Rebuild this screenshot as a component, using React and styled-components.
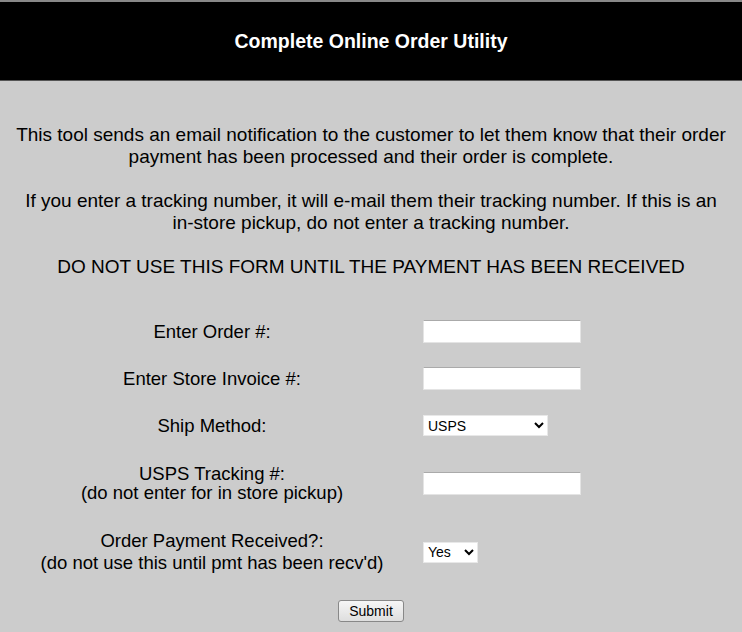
import React from "react";
import styled, { createGlobalStyle } from "styled-components";

const GlobalStyle = createGlobalStyle`
  html, body {
    margin: 0;
    padding: 0;
    background: #cccccc;
  }
  body {
    font-family: "Liberation Sans", Arial, sans-serif;
    color: #000;
  }
`;

const rows = [
  { label: ["Enter Order #:"], field: "text" },
  { label: ["Enter Store Invoice #:"], field: "text" },
  { label: ["Ship Method:"], field: "ship" },
  { label: ["USPS Tracking #:", "(do not enter for in store pickup)"], field: "text", lh: 19 },
  {
    label: ["Order Payment Received?:", "(do not use this until pmt has been recv'd)"],
    field: "paid",
    lh: 22
  }
];

export default function App() {
  return (
    <>
      <GlobalStyle />
      <Page>
        <Header>
          <Title>Complete Online Order Utility</Title>
        </Header>
        <Intro>
          <Para>
            This tool sends an email notification to the customer to let them know that their order
            payment has been processed and their order is complete.
          </Para>
          <Para>
            If you enter a tracking number, it will e-mail them their tracking number. If this is an{" "}
            <NoWrap>in-store</NoWrap> pickup, do not enter a tracking number.
          </Para>
          <Para>DO NOT USE THIS FORM UNTIL THE PAYMENT HAS BEEN RECEIVED</Para>
        </Intro>
        <Form onSubmit={e => e.preventDefault()}>
          {rows.map((row, i) => (
            <Row key={i} tall={row.label.length > 1}>
              <Label lh={row.lh || 19}>
                {row.label.map((line, j) => (
                  <div key={j}>{line}</div>
                ))}
              </Label>
              <Field>
                {row.field === "text" && <TextInput type="text" />}
                {row.field === "ship" && (
                  <Select width={125} defaultValue="USPS">
                    <option>USPS</option>
                    <option>UPS</option>
                    <option>FedEx</option>
                    <option>In Store Pickup</option>
                  </Select>
                )}
                {row.field === "paid" && (
                  <Select width={55} defaultValue="Yes">
                    <option>Yes</option>
                    <option>No</option>
                  </Select>
                )}
              </Field>
            </Row>
          ))}
          <Actions>
            <SubmitButton type="submit">Submit</SubmitButton>
          </Actions>
        </Form>
      </Page>
    </>
  );
}

const Page = styled.div`
  min-height: 632px;
  border-top: 2px solid #888;
`;

const Header = styled.div`
  background: #000;
  height: 78px;
  border-bottom: 1px solid #555;
  display: flex;
  align-items: center;
  justify-content: center;
`;

const Title = styled.h1`
  margin: 0;
  color: #fff;
  font-size: 19.5px;
  font-weight: bold;
`;

const Intro = styled.div`
  padding: 43px 8px 0;
  text-align: center;
`;

const Para = styled.p`
  margin: 0 0 22px;
  font-size: 19px;
  line-height: 22px;
`;

const NoWrap = styled.span`
  white-space: nowrap;
`;

const Form = styled.form`
  padding-top: 20px;
`;

const Row = styled.div`
  display: grid;
  grid-template-columns: 418px 1fr;
  align-items: center;
  min-height: ${props => (props.tall ? "44px" : "23px")};
  margin-bottom: ${props => (props.tall ? "25px" : "24px")};
`;

const Label = styled.div`
  padding-left: 6px;
  text-align: center;
  font-size: 18.5px;
  line-height: ${props => props.lh}px;
  white-space: nowrap;
`;

const Field = styled.div`
  padding-left: 5px;
  display: flex;
  align-items: center;
`;

const TextInput = styled.input`
  box-sizing: border-box;
  width: 158px;
  height: 23px;
  border: 1px solid #e4e4e4;
  border-top-color: #aaa;
  background: #fff;
`;

const Select = styled.select`
  box-sizing: border-box;
  width: ${props => props.width}px;
  height: 21px;
  font-family: "Liberation Sans", Arial, sans-serif;
  font-size: 14px;
  border: 1px solid #e8e8e8;
  background: #fff;
  color: #000;
`;

const Actions = styled.div`
  display: flex;
  justify-content: center;
  padding-top: 1px;
`;

const SubmitButton = styled.button`
  width: 66px;
  height: 22px;
  font-family: "Liberation Sans", Arial, sans-serif;
  font-size: 14px;
  background: linear-gradient(#f6f6f6, #dedede);
  border: 1px solid #888;
  border-radius: 3px;
  color: #000;
`;
